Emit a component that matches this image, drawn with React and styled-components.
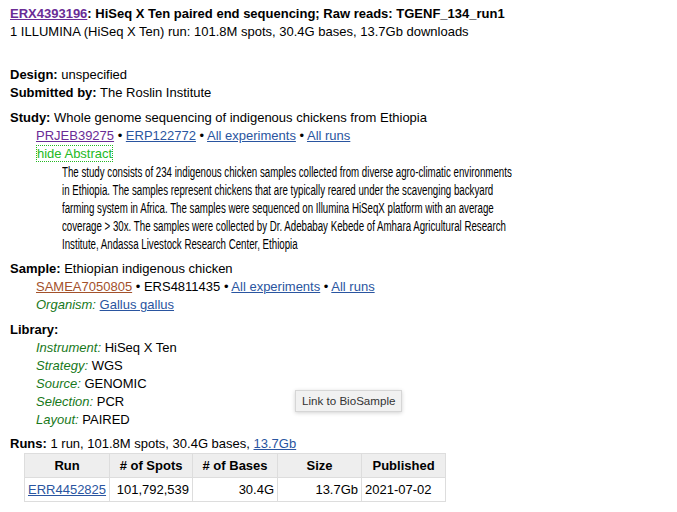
import React from 'react';
import styled, { createGlobalStyle } from 'styled-components';

const GlobalStyle = createGlobalStyle`
  body {
    margin: 0;
    background: #fff;
    font-family: "Liberation Sans", Arial, sans-serif;
    font-size: 13px;
    color: #000;
  }
`;

const Page = styled.div`
  position: relative;
  padding: 5px 10px;
  line-height: 18px;
`;

const Header = styled.div`
  margin-bottom: 25px;
`;

const Title = styled.div`
  font-weight: bold;
`;

const Section = styled.div`
  margin-bottom: ${p => (p.$gap ?? 7)}px;
`;

const Label = styled.b`
  font-weight: bold;
`;

const Indent = styled.div`
  padding-left: ${p => p.$level * 26}px;
`;

const A = styled.a`
  color: ${p => p.$color || '#2a55a0'};
  text-decoration: underline;
  cursor: pointer;
`;

const Toggle = styled.span`
  display: inline-block;
  color: #23b923;
  line-height: 15px;
  border: 1px dotted #23b923;
`;

// the source renders the abstract in a narrow face; squeeze the regular one
const Abstract = styled.div`
  margin-left: 52px;
  white-space: nowrap;
  font-size: 14px;
  transform: scaleX(0.693);
  transform-origin: left top;
`;

const Field = styled.i`
  color: #17781a;
`;

const Table = styled.table`
  margin-left: 14px;
  border-collapse: collapse;
  table-layout: fixed;
  line-height: 17px;
`;

const Th = styled.th`
  box-sizing: border-box;
  background: #eee;
  border: 1px solid #ddd;
  padding: 3px 4px;
  font-weight: bold;
  text-align: center;
  width: ${p => p.$w}px;
`;

const Td = styled.td`
  border: 1px solid #ddd;
  padding: 3px 3px;
  white-space: nowrap;
  text-align: ${p => p.$align || 'left'};
`;

const Tooltip = styled.div`
  position: absolute;
  left: 295px;
  top: 390px;
  padding: 2px 6px;
  background: #f1f1f1;
  border: 1px solid #d6d6d6;
  box-shadow: 0 1px 4px rgba(0, 0, 0, 0.18);
  color: #333;
  font-size: 11.6px;
  line-height: 16px;
`;

const purple = '#6a2c96';
const brown = '#a3512b';

const abstractLines = [
  'The study consists of 234 indigenous chicken samples collected from diverse agro-climatic environments',
  'in Ethiopia. The samples represent chickens that are typically reared under the scavenging backyard',
  'farming system in Africa. The samples were sequenced on Illumina HiSeqX platform with an average',
  'coverage > 30x. The samples were collected by Dr. Adebabay Kebede of Amhara Agricultural Research',
  'Institute, Andassa Livestock Research Center, Ethiopia',
];

export default function App() {
  return (
    <>
      <GlobalStyle />
      <Page>
        <Header>
          <Title>
            <A $color={purple}>ERX4393196</A>: HiSeq X Ten paired end sequencing; Raw reads: TGENF_134_run1
          </Title>
          <div>1 ILLUMINA (HiSeq X Ten) run: 101.8M spots, 30.4G bases, 13.7Gb downloads</div>
        </Header>

        <Section $gap={0}>
          <Label>Design:</Label> unspecified
        </Section>
        <Section>
          <Label>Submitted by:</Label> The Roslin Institute
        </Section>

        <Section>
          <div>
            <Label>Study:</Label> Whole genome sequencing of indigenous chickens from Ethiopia
          </div>
          <Indent $level={1}>
            <A $color={purple}>PRJEB39275</A> • <A>ERP122772</A> • <A>All experiments</A> • <A>All runs</A>
          </Indent>
          <Indent $level={1}>
            <Toggle>hide Abstract</Toggle>
          </Indent>
          <Abstract>
            {abstractLines.map(line => (
              <div key={line}>{line}</div>
            ))}
          </Abstract>
        </Section>

        <Section>
          <div>
            <Label>Sample:</Label> Ethiopian indigenous chicken
          </div>
          <Indent $level={1}>
            <A $color={brown}>SAMEA7050805</A> • ERS4811435 • <A>All experiments</A> • <A>All runs</A>
          </Indent>
          <Indent $level={1}>
            <Field>Organism:</Field> <A>Gallus gallus</A>
          </Indent>
        </Section>

        <Section $gap={6}>
          <div>
            <Label>Library:</Label>
          </div>
          <Indent $level={1}><Field>Instrument:</Field> HiSeq X Ten</Indent>
          <Indent $level={1}><Field>Strategy:</Field> WGS</Indent>
          <Indent $level={1}><Field>Source:</Field> GENOMIC</Indent>
          <Indent $level={1}><Field>Selection:</Field> PCR</Indent>
          <Indent $level={1}><Field>Layout:</Field> PAIRED</Indent>
        </Section>

        <div>
          <Label>Runs:</Label> 1 run, 101.8M spots, 30.4G bases, <A>13.7Gb</A>
        </div>
        <Table>
          <thead>
            <tr>
              <Th $w={84}>Run</Th>
              <Th $w={83}># of Spots</Th>
              <Th $w={85}># of Bases</Th>
              <Th $w={84}>Size</Th>
              <Th $w={84}>Published</Th>
            </tr>
          </thead>
          <tbody>
            <tr>
              <Td><A>ERR4452825</A></Td>
              <Td $align="right">101,792,539</Td>
              <Td $align="right">30.4G</Td>
              <Td $align="right">13.7Gb</Td>
              <Td>2021-07-02</Td>
            </tr>
          </tbody>
        </Table>

        <Tooltip>Link to BioSample</Tooltip>
      </Page>
    </>
  );
}
